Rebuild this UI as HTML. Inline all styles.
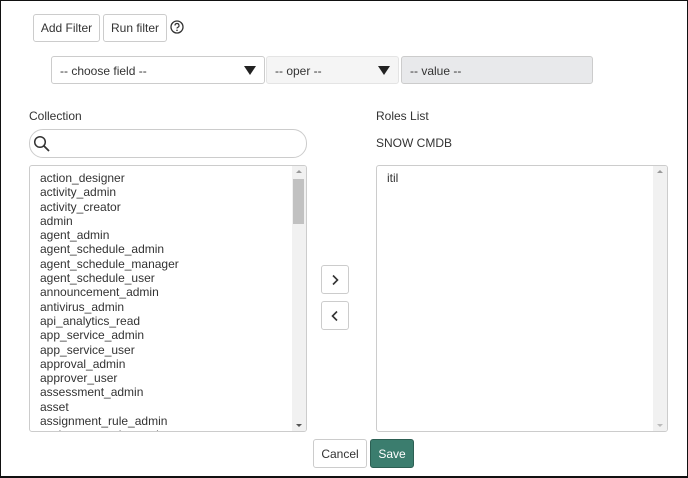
<!DOCTYPE html>
<html><head><style>
*{box-sizing:border-box;margin:0;padding:0}
body{width:688px;height:478px;overflow:hidden;background:#fff;font-family:"Liberation Sans",sans-serif;font-size:12px;color:#333;position:relative}
.frame{position:absolute;left:0;top:0;width:688px;height:478px;border:1px solid #111;border-bottom:2px solid #111}
.a{position:absolute}
.btn{position:absolute;border:1px solid #ccc;border-radius:3px;background:#fff;display:flex;align-items:center;justify-content:center;font-size:12px;color:#333}
.list{position:absolute;border:1px solid #ccc;border-radius:3px;background:#fff;overflow:hidden}
.sb{position:absolute;right:0;top:0;bottom:0;width:14px;background:#f1f1f1}
.items{position:absolute;left:10px;top:5px;line-height:14.3px;font-size:12px;color:#333}
.tri{position:absolute;width:0;height:0;border-left:6px solid transparent;border-right:6px solid transparent;border-top:9px solid #222}
</style></head><body>
<div class="frame"></div>
<div class="btn" style="left:33px;top:14px;width:67px;height:28px">Add Filter</div>
<div class="btn" style="left:103px;top:14px;width:64px;height:28px">Run filter</div>
<svg class="a" style="left:170px;top:20px" width="14" height="14" viewBox="0 0 14 14"><circle cx="7" cy="7" r="6" fill="none" stroke="#333" stroke-width="1.3"/><path d="M5 5.5a2 2 0 1 1 2.6 1.9c-.5.2-.6.5-.6 1.1" fill="none" stroke="#333" stroke-width="1.2"/><circle cx="7" cy="10.3" r=".8" fill="#333"/></svg>
<div class="a" style="left:51px;top:56px;width:214px;height:28px;border:1px solid #ccc;border-radius:3px;padding:7px 8px">-- choose field --</div>
<div class="tri" style="left:244px;top:66px"></div>
<div class="a" style="left:266px;top:56px;width:133px;height:28px;border:1px solid #e4e4e4;background:#f5f5f5;border-radius:3px;padding:7px 8px">-- oper --</div>
<div class="tri" style="left:378px;top:66px"></div>
<div class="a" style="left:401px;top:56px;width:192px;height:28px;border:1px solid #ccc;background:#e8e9eb;border-radius:3px;padding:7px 8px">-- value --</div>
<div class="a" style="left:29px;top:109px">Collection</div>
<div class="a" style="left:29px;top:129px;width:278px;height:29px;border:1px solid #ccc;border-radius:14px"></div>
<svg class="a" style="left:33px;top:135px" width="18" height="18" viewBox="0 0 18 18"><circle cx="7" cy="7" r="5.3" fill="none" stroke="#333" stroke-width="1.5"/><path d="M11 11l5 5" stroke="#333" stroke-width="1.8"/></svg>
<div class="list" style="left:29px;top:165px;width:278px;height:267px">
<div class="items">action_designer<br>activity_admin<br>activity_creator<br>admin<br>agent_admin<br>agent_schedule_admin<br>agent_schedule_manager<br>agent_schedule_user<br>announcement_admin<br>antivirus_admin<br>api_analytics_read<br>app_service_admin<br>app_service_user<br>approval_admin<br>approver_user<br>assessment_admin<br>asset<br>assignment_rule_admin<br>assignment_rule_read</div>
<div class="sb"><div class="a" style="left:4px;top:4px;border:3px solid transparent;border-bottom:3px solid #999;border-top:0;width:0"></div><div class="a" style="left:1px;top:13px;width:11px;height:45px;background:#c1c1c1"></div><div class="a" style="left:4px;bottom:4px;border:3px solid transparent;border-top:3px solid #555;border-bottom:0;width:0"></div></div>
</div>
<div class="btn" style="left:321px;top:265px;width:28px;height:29px"><svg width="10" height="12" viewBox="0 0 10 12"><path d="M3 1.5l4.5 4.5L3 10.5" fill="none" stroke="#333" stroke-width="1.6"/></svg></div>
<div class="btn" style="left:321px;top:301px;width:28px;height:29px"><svg width="10" height="12" viewBox="0 0 10 12"><path d="M7 1.5L2.5 6 7 10.5" fill="none" stroke="#333" stroke-width="1.6"/></svg></div>
<div class="a" style="left:376px;top:109px">Roles List</div>
<div class="a" style="left:376px;top:136px">SNOW CMDB</div>
<div class="list" style="left:376px;top:165px;width:292px;height:267px">
<div class="items">itil</div>
<div class="sb"><div class="a" style="left:4px;top:4px;border:3px solid transparent;border-bottom:3px solid #999;border-top:0;width:0"></div><div class="a" style="left:4px;bottom:4px;border:3px solid transparent;border-top:3px solid #bbb;border-bottom:0;width:0"></div></div>
</div>
<div class="btn" style="left:313px;top:439px;width:54px;height:29px">Cancel</div>
<div class="btn" style="left:370px;top:439px;width:44px;height:29px;background:#3b7d6e;border-color:#2c5f53;color:#fff">Save</div>
</body></html>
